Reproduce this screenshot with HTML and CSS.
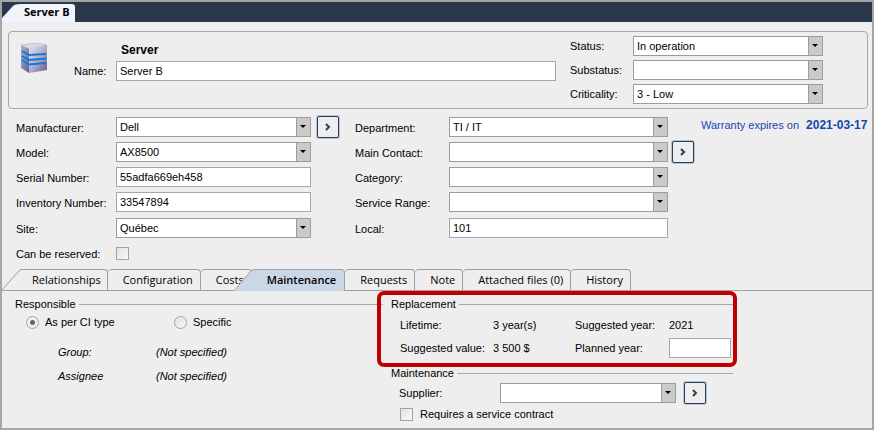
FILE: index.html
```html
<!DOCTYPE html>
<html lang="en">
<head>
  <meta charset="UTF-8">
  <meta name="viewport" content="width=device-width, initial-scale=1.0">
  <title>Server B</title>
  <link rel="stylesheet" href="styles.css">
</head>
<body>
<div class="window">

  <header class="titlebar">
    <svg class="title-slant" viewBox="0 0 18 18"><path d="M0 18V14L11 2Q13 0 18 0V18Z"/></svg>
    <h1>Server B</h1>
  </header>

  <section class="summary">
    <svg class="server-icon" viewBox="0 0 26 31">
      <defs>
        <linearGradient id="side" x1="0" y1="0" x2="1" y2="1">
          <stop offset="0" stop-color="#b4b4cc"/>
          <stop offset="1" stop-color="#5f5f96"/>
        </linearGradient>
        <linearGradient id="front" x1="0" y1="0" x2="1" y2="1">
          <stop offset="0" stop-color="#e6e6f0"/>
          <stop offset="0.5" stop-color="#b0aecb"/>
          <stop offset="1" stop-color="#65588a"/>
        </linearGradient>
      </defs>
      <path d="M0 2L16 0L26 2L8 6Z" fill="#d9d9e4" stroke="#a8a8b8" stroke-width="0.5"/>
      <path d="M0 2L8 6V30L0 25Z" fill="url(#side)"/>
      <path d="M8 6L26 2V27L8 30Z" fill="url(#front)"/>
      <path d="M1 8L8 12L25 11M1 13L8 17L25 15.500M1 17L8 21.500L25 20" fill="none" stroke="#1478d8" stroke-width="2"/>
    </svg>
    <div class="identity">
      <h2>Server</h2>
      <label for="name">Name:</label>
      <input type="text" id="name" value="Server B">
    </div>
    <div class="state">
      <label for="status">Status:</label>
      <div class="select"><select id="status"><option>In operation</option></select></div>
      <label for="substatus">Substatus:</label>
      <div class="select"><select id="substatus"><option></option></select></div>
      <label for="criticality">Criticality:</label>
      <div class="select"><select id="criticality"><option>3 - Low</option></select></div>
    </div>
  </section>

  <section class="details">
    <div class="fields fields-left">
      <label for="manufacturer">Manufacturer:</label>
      <div class="select"><select id="manufacturer"><option>Dell</option></select></div>
      <button class="go" aria-label="Open manufacturer"><svg viewBox="0 0 8 10"><path d="M2 2L5 5L2 8"/></svg></button>
      <label for="model">Model:</label>
      <div class="select"><select id="model"><option>AX8500</option></select></div>
      <label for="serial">Serial Number:</label>
      <input type="text" id="serial" value="55adfa669eh458">
      <label for="inventory">Inventory Number:</label>
      <input type="text" id="inventory" value="33547894">
      <label for="site">Site:</label>
      <div class="select"><select id="site"><option>Québec</option></select></div>
      <label for="reserved">Can be reserved:</label>
      <input type="checkbox" id="reserved">
    </div>
    <div class="fields fields-right">
      <label for="department">Department:</label>
      <div class="select"><select id="department"><option>TI / IT</option></select></div>
      <label for="contact">Main Contact:</label>
      <div class="select"><select id="contact"><option></option></select></div>
      <button class="go" aria-label="Open contact"><svg viewBox="0 0 8 10"><path d="M2 2L5 5L2 8"/></svg></button>
      <label for="category">Category:</label>
      <div class="select"><select id="category"><option></option></select></div>
      <label for="range">Service Range:</label>
      <div class="select"><select id="range"><option></option></select></div>
      <label for="local">Local:</label>
      <input type="text" id="local" value="101">
    </div>
    <p class="warranty">Warranty expires on <b>2021-03-17</b></p>
  </section>

  <nav class="tabs" role="tablist">
    <button class="tab tab-first" role="tab"><svg class="slant" viewBox="0 0 20 21"><path d="M0 21L16 3Q18 0.5 20 0.5"/></svg><span>Relationships</span></button>
    <button class="tab" role="tab">Configuration</button>
    <button class="tab" role="tab">Costs</button>
    <button class="tab tab-active" role="tab" aria-selected="true"><svg class="slant" viewBox="0 0 20 22"><path d="M0 22L16 3Q18 0.5 20 0.5V22Z" class="fill"/><path d="M0 22L16 3Q18 0.5 20 0.5"/></svg><span>Maintenance</span></button>
    <button class="tab" role="tab">Requests</button>
    <button class="tab" role="tab">Note</button>
    <button class="tab" role="tab">Attached files (0)</button>
    <button class="tab" role="tab">History</button>
  </nav>

  <section class="panel">
    <fieldset class="responsible">
      <legend>Responsible</legend>
      <div class="choices">
        <label><input type="radio" name="responsible" checked>As per CI type</label>
        <label><input type="radio" name="responsible">Specific</label>
      </div>
      <dl>
        <dt>Group:</dt>
        <dd>(Not specified)</dd>
        <dt>Assignee</dt>
        <dd>(Not specified)</dd>
      </dl>
    </fieldset>

    <div class="plans">
      <fieldset class="replacement">
        <legend>Replacement</legend>
        <div class="values">
          <span>Lifetime:</span>
          <span>3 year(s)</span>
          <span>Suggested year:</span>
          <span>2021</span>
          <span>Suggested value:</span>
          <span>3 500 $</span>
          <label for="planned">Planned year:</label>
          <input type="text" id="planned">
        </div>
      </fieldset>
      <fieldset class="maintenance">
        <legend>Maintenance</legend>
        <div class="supplier">
          <label for="supplier">Supplier:</label>
          <div class="select"><select id="supplier"><option></option></select></div>
          <button class="go" aria-label="Open supplier"><svg viewBox="0 0 8 10"><path d="M2 2L5 5L2 8"/></svg></button>
        </div>
        <label class="contract"><input type="checkbox">Requires a service contract</label>
      </fieldset>
    </div>
  </section>

</div>
</body>
</html>
```
FILE: styles.css
```css
* {
  box-sizing: border-box;
}

body {
  margin: 0;
  font-family: "Liberation Sans", Arial, sans-serif;
  font-size: 11px;
  line-height: 16px;
  color: #000;
}

.window {
  min-height: 100vh;
  border: 2px solid #a5a5a5;
  background: #eee;
}

input,
select,
button {
  font: inherit;
  color: inherit;
  margin: 0;
}

input[type="text"],
select {
  width: 100%;
  height: 20px;
  padding: 0 3px;
  border: 1px solid #a6a6ae;
  border-radius: 0;
  background: #fff;
}

select {
  display: block;
  appearance: none;
  border-color: #9c9c9c;
  background: linear-gradient(#9c9c9c, #9c9c9c) right 13px top / 1px 100% no-repeat, linear-gradient(#cacaca, #cacaca) right / 13px 100% no-repeat #fff;
}

.select {
  position: relative;
}

.select::after {
  content: "";
  position: absolute;
  right: 5px;
  top: 8px;
  border: 3px solid transparent;
  border-top-color: #000;
  border-bottom: 0;
  pointer-events: none;
}

input[type="checkbox"],
input[type="radio"] {
  appearance: none;
  flex: none;
  width: 13px;
  height: 13px;
  border: 1px solid #a3a3a3;
  background: linear-gradient(135deg, #e2e2e2, #f8f8f8);
}

input[type="radio"] {
  border-radius: 50%;
}

input[type="radio"]:checked {
  background: radial-gradient(circle, #666 2px, #f0f0f0 3px);
}

.go {
  width: 22px;
  height: 22px;
  padding: 0;
  display: flex;
  align-items: center;
  justify-content: center;
  border: 1px solid #2c3e57;
  border-radius: 2px;
  background: #eee;
  box-shadow: 0 0 0 1px #b5c3d0;
}

.go svg {
  width: 8px;
  height: 10px;
  fill: none;
  stroke: #2c3e57;
  stroke-width: 2;
}

/* title bar */
.titlebar {
  display: flex;
  align-items: flex-end;
  height: 20px;
  background: #2b384b;
}

.title-slant {
  width: 18px;
  height: 18px;
  fill: #f1f5fb;
}

.titlebar h1 {
  margin: 0;
  height: 18px;
  padding: 0 5px 0 4px;
  font: bold 11px/16px "Open Sans", "Noto Sans", sans-serif;
  border-radius: 0 3px 0 0;
  background: #f1f5fb;
}

/* header box */
.summary {
  display: flex;
  margin: 9px 4px 0 6px;
  padding: 4px 44px 4px 12px;
  border: 1px solid #a6a6b2;
  border-radius: 4px;
}

.server-icon {
  width: 26px;
  height: 31px;
  margin-top: 7px;
}

.identity {
  flex: 1;
  display: grid;
  grid-template-columns: 42px 1fr;
  grid-template-rows: 25px 20px;
  align-items: center;
  margin: 0 14px 0 27px;
}

.identity h2 {
  grid-column: 2;
  margin: 0;
  padding: 3px 0 0 5px;
  font-size: 12px;
}

.state {
  display: grid;
  grid-template-columns: 63px 190px;
  row-gap: 4px;
  align-items: center;
}

/* form */
.details {
  display: flex;
  margin: 6px 4px 0 14px;
}

.fields {
  display: grid;
  grid-template-rows: 24px 25px 25px 26px 26px 24px;
  align-items: center;
}

.fields label {
  grid-column: 1;
  padding-top: 2px;
}

.fields .go {
  margin-left: 6px;
}

.fields-left {
  flex: 339 1 0;
  grid-template-columns: 100px 1fr 44px;
}

.fields-right {
  flex: 346 1 0;
  grid-template-columns: 94px 1fr 33px;
}

.fields-right .go {
  margin-left: 4px;
}

.warranty {
  flex: none;
  width: 167px;
  margin: 2px 0 0;
  color: #1546b0;
  white-space: nowrap;
}

.warranty b {
  margin-left: 4px;
  font-size: 12px;
}

/* tabs */
.tabs {
  display: flex;
  height: 22px;
  margin-top: 4px;
  border-bottom: 1px solid #a0a0a0;
}

.tab {
  display: flex;
  height: 21px;
  padding: 0 7px 0 15px;
  border: 1px solid #a0a0a0;
  border-width: 1px 1px 0 0;
  border-radius: 4px 4px 0 0;
  background: none;
  font: 11px/19px "Open Sans", "Noto Sans", sans-serif;
  white-space: nowrap;
}

.slant {
  flex: none;
  width: 20px;
  height: 21px;
  fill: none;
  stroke: #a0a0a0;
}

.slant .fill {
  fill: #c9d7e7;
  stroke: none;
}

.tab-first,
.tab-active {
  padding: 0;
  border: 0;
}

.tab-first span,
.tab-active span {
  height: 21px;
  padding: 0 6px 0 10px;
  border: 1px solid #a0a0a0;
  border-width: 1px 1px 0 0;
  border-radius: 0 4px 0 0;
}

.tab-active {
  position: relative;
  height: 22px;
  margin-left: -18px;
  font-weight: 600;
}

.tab-active .slant {
  height: 22px;
}

.tab-active span {
  height: 22px;
  padding: 0 8px 0 13px;
  background: #c9d7e7;
}

/* maintenance tab */
.panel {
  display: flex;
  gap: 8px;
  padding: 5px 139px 0 13px;
}

fieldset {
  min-width: 0;
  margin: 0;
  padding: 0;
  border: 0;
  border-top: 1px solid #a6a6b2;
}

legend {
  padding: 0 3px 0 0;
}

.responsible {
  flex: 368 1 0;
}

.choices {
  display: flex;
  padding: 2px 0 0 11px;
}

.choices label {
  display: flex;
  align-items: center;
  gap: 6px;
  width: 148px;
}

dl {
  display: grid;
  grid-template-columns: 98px 1fr;
  row-gap: 8px;
  margin: 14px 0 0 43px;
  font-style: italic;
}

dd {
  margin: 0;
}

.plans {
  flex: 342 1 0;
}

/* highlighted group */
.replacement {
  position: relative;
}

.replacement::before {
  content: "";
  position: absolute;
  inset: -21px -4px -6px -14px;
  border: 4px solid #c00000;
  border-radius: 7px;
  pointer-events: none;
}

.values {
  display: grid;
  grid-template-columns: 93px 82px 94px 1fr;
  row-gap: 5px;
  align-items: center;
  padding: 5px 2px 3px 9px;
}

.maintenance {
  margin-top: 4px;
}

.supplier {
  display: grid;
  grid-template-columns: 101px 1fr 57px;
  align-items: center;
  padding: 1px 0 0 8px;
}

.supplier .go {
  margin-left: 8px;
}

.contract {
  display: flex;
  align-items: center;
  gap: 7px;
  padding: 2px 0 0 9px;
}
```
